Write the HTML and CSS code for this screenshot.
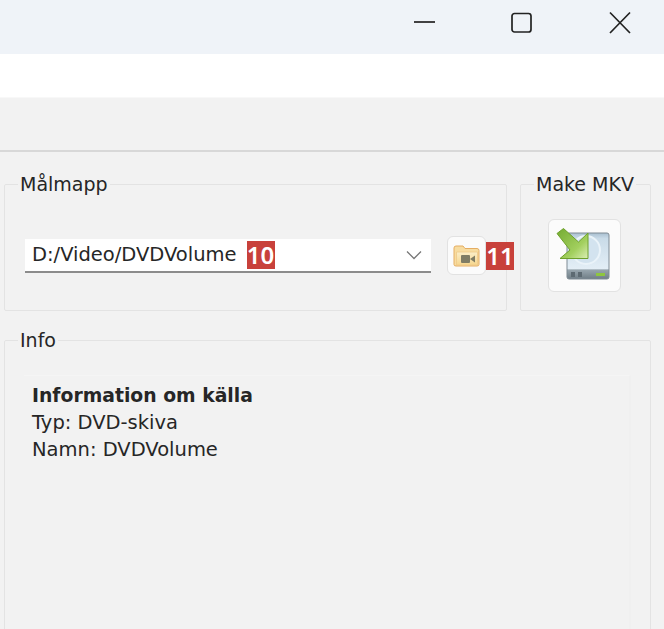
FILE: index.html
```html
<!DOCTYPE html>
<html lang="sv">
<head>
<meta charset="utf-8">
<title>Make MKV</title>
<link rel="stylesheet" href="styles.css">
</head>
<body>
<header class="titlebar">
  <svg class="win-icon" width="24" height="24" viewBox="0 0 24 24"><path d="M0 12h21" /></svg>
  <svg class="win-icon" width="24" height="24" viewBox="0 0 24 24"><rect x="1" y="3.500" width="19" height="18.500" rx="2.500" /></svg>
  <svg class="win-icon" width="24" height="24" viewBox="0 0 24 24"><path d="M2 2.500l20 20.500M22 2.500L2 23" /></svg>
</header>
<div class="menubar"></div>
<div class="toolbar"></div>
<main class="content">
  <div class="top-row">
    <fieldset class="group target">
      <legend>Målmapp</legend>
      <div class="target-row">
        <div class="combo">
          <span class="combo-value">D:/Video/DVDVolume</span>
          <span class="badge">10</span>
          <svg class="chevron" width="16" height="10" viewBox="0 0 16 10"><path d="M1 1.500l7 7 7-7" /></svg>
        </div>
        <button class="tool-btn folder-btn" type="button">
          <svg width="27" height="22" viewBox="0 0 27 22">
            <defs>
              <linearGradient id="fold" x1="0" y1="0" x2="0" y2="1"><stop offset="0" stop-color="#fbeec8"/><stop offset="1" stop-color="#f6d68e"/></linearGradient>
            </defs>
            <path d="M1 3q0-2 2-2h7l2 2.500h12q2 0 2 2v14q0 1.500-2 1.500H3q-2 0-2-1.500z" fill="#f7dca0" stroke="#e5ad62"/>
            <path d="M3.500 7h21v13h-21z" fill="url(#fold)" stroke="#efc988" stroke-width=".8"/>
            <rect x="8" y="10" width="9" height="8" rx="1" fill="#7f7c64"/>
            <path d="M17 14l5-3.500v7z" fill="#7f7c64"/>
          </svg>
        </button>
        <span class="badge">11</span>
      </div>
    </fieldset>
    <fieldset class="group make">
      <legend>Make MKV</legend>
      <div class="make-row">
        <button class="tool-btn make-btn" type="button">
          <svg width="71" height="71" viewBox="0 0 71 71">
            <defs>
              <linearGradient id="drive" x1="0" y1="0" x2="0" y2="1"><stop offset="0" stop-color="#a9bfd0"/><stop offset=".12" stop-color="#c9dbe8"/><stop offset=".78" stop-color="#e3eef6"/><stop offset=".8" stop-color="#98a6ae"/><stop offset="1" stop-color="#6f7d86"/></linearGradient>
              <linearGradient id="arrow" x1="0" y1="0" x2="1" y2="1"><stop offset="0" stop-color="#74ab32"/><stop offset=".65" stop-color="#a2cf5e"/><stop offset="1" stop-color="#dcefb6"/></linearGradient>
            </defs>
            <rect x="18" y="13" width="42" height="46" rx="2" fill="url(#drive)" stroke="#7f8b94"/>
            <circle cx="37" cy="30" r="14" fill="#d3e3ef" stroke="#eaf3f9" stroke-width="2"/>
            <rect x="22" y="52" width="4" height="5" fill="#5d6a72"/><rect x="29" y="52" width="4" height="5" fill="#5d6a72"/>
            <rect x="47" y="53" width="9" height="3" fill="#8ec63f"/>
            <path d="M8 13.500L14.500 8.500 29.500 22 39 13v25.500H11L21 30z" fill="url(#arrow)" stroke="#6ea12c"/>
          </svg>
        </button>
      </div>
    </fieldset>
  </div>
  <fieldset class="group info">
    <legend>Info</legend>
    <div class="info-box">
      <p class="info-title">Information om källa</p>
      <p>Typ: DVD-skiva</p>
      <p>Namn: DVDVolume</p>
    </div>
  </fieldset>
</main>
</body>
</html>
```
FILE: styles.css
```css
html, body {
  margin: 0;
  height: 629px;
  overflow: hidden;
  background: #f2f2f2;
}
body {
  font-family: "DejaVu Sans", sans-serif;
  font-size: 19.500px;
  color: #262626;
}
.titlebar {
  height: 54px;
  background: #eff3f8;
  display: flex;
  justify-content: flex-end;
  align-items: center;
  gap: 73px;
  padding: 0 32px 10px 0;
  box-sizing: border-box;
}
.win-icon {
  fill: none;
  stroke: #222;
  stroke-width: 1.700;
}
.menubar {
  height: 43px;
  background: #fff;
  border-bottom: 1px solid #f8f8f8;
}
.toolbar {
  height: 52px;
  border-bottom: 2px solid #d8d8d8;
}
.content {
  height: 458px;
  overflow: hidden;
  padding: 19px 13px 0 4px;
  display: flex;
  flex-direction: column;
  gap: 16px;
}
.top-row {
  display: flex;
  flex: none;
  gap: 13px;
}
.group {
  margin: 0;
  padding: 0;
  border: 1.500px solid #e3e3e3;
  border-radius: 2px;
  min-width: 0;
  box-sizing: border-box;
}
.group legend {
  padding: 0 2px;
  margin-left: 13px;
  line-height: 26px;
  font-size: 19px;
}
.target {
  width: 503px;
  height: 140px;
}
.target-row {
  display: flex;
  align-items: center;
  padding: 39px 0 0 20px;
}
.combo {
  width: 406px;
  height: 34px;
  flex: none;
  box-sizing: border-box;
  background: #fff;
  border-bottom: 2px solid #8c8c8c;
  display: flex;
  align-items: center;
  padding-left: 7px;
  gap: 10px;
}
.badge {
  background: #c8413b;
  color: #fff;
  width: 28px;
  height: 28px;
  font-family: "Noto Sans", sans-serif;
  font-size: 24px;
  font-weight: 600;
  line-height: 28px;
  text-align: center;
  flex: none;
}
.chevron {
  margin-left: auto;
  margin-right: 9px;
  fill: none;
  stroke: #777;
  stroke-width: 1.300;
}
.tool-btn {
  padding: 0;
  background: #fbfbfb;
  border: 1px solid #e2e2e2;
  border-radius: 6px;
  display: flex;
  align-items: center;
  justify-content: center;
  flex: none;
}
.folder-btn {
  width: 39px;
  height: 39px;
  margin-left: 16px;
}
.make {
  width: 131px;
  height: 140px;
}
.make-row {
  display: flex;
  justify-content: center;
  padding: 22px 2px 0 0;
}
.make-btn {
  width: 73px;
  height: 73px;
}
.info {
  flex: none;
  height: 400px;
}
.info-box {
  margin: 22px 19px 0 19px;
  padding: 6px 8px;
  height: 360px;
  border-top: 1.500px solid #f5f5f5;
  border-right: 2px solid #f0f0f0;
  line-height: 27px;
}
.info-box p {
  margin: 0;
}
.info-box .info-title {
  font-weight: 700;
  font-size: 18.800px;
}
```
